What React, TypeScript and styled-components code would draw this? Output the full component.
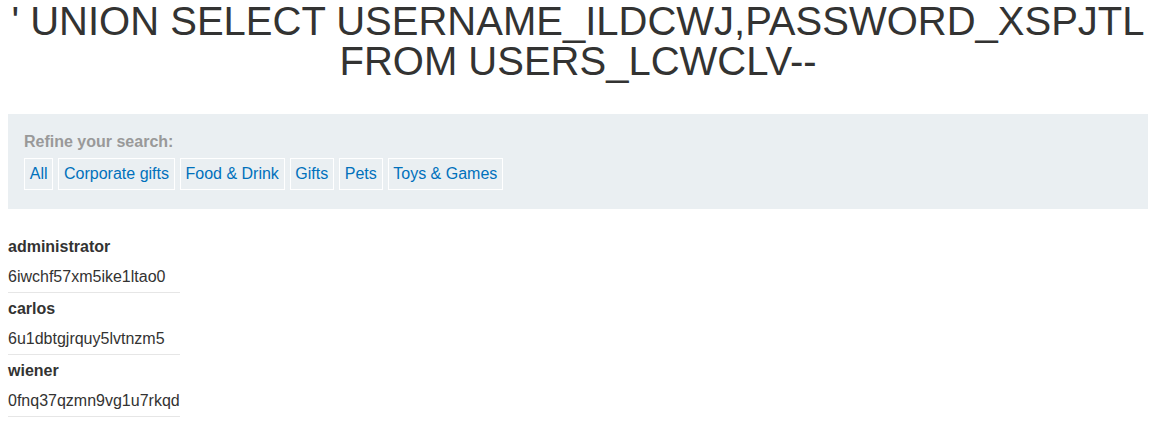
import React from 'react'
import styled, { createGlobalStyle } from 'styled-components'

const GlobalStyle = createGlobalStyle`
  body {
    margin: 0;
    padding: 2px 7px 0 8px;
    background: #fff;
    font-family: "Liberation Sans", Arial, sans-serif;
    color: #333332;
  }
`;

const Title = styled.h1`
  margin: 0 0 33px;
  font-size: 40px;
  font-weight: 400;
  line-height: 39.5px;
  text-align: center;
  color: #333332;
`;

const Filters = styled.section`
  background: #eaeff2;
  padding: 19px 16px 19px;
`;

const FilterLabel = styled.div`
  font-size: 16px;
  font-weight: 700;
  color: #999;
  line-height: 18px;
  margin-bottom: 7px;
`;

const FilterList = styled.div`
  display: flex;
  gap: 5px;
`;

const FilterLink = styled.a`
  display: flex;
  align-items: center;
  height: 32px;
  box-sizing: border-box;
  padding: 0 4.75px;
  border: 1px solid #fff;
  color: #0071bc;
  font-size: 16px;
  text-decoration: none;
`;

const Table = styled.table`
  margin-top: 22px;
  border-collapse: collapse;
  font-size: 16px;
  color: #333332;
`;

const HeadCell = styled.th`
  text-align: left;
  font-weight: 700;
  padding: 6px 0 5px;
  line-height: 20px;
`;

const DataCell = styled.td`
  padding: 5px 0 5px;
  line-height: 20px;
  border-bottom: 1px solid #e6e6e6;
`;

const categories = ['All', 'Corporate gifts', 'Food & Drink', 'Gifts', 'Pets', 'Toys & Games'];

const users = [
  { name: 'administrator', password: '6iwchf57xm5ike1ltao0' },
  { name: 'carlos', password: '6u1dbtgjrquy5lvtnzm5' },
  { name: 'wiener', password: '0fnq37qzmn9vg1u7rkqd' },
];

const App = () => {
  return (
    <>
      <GlobalStyle />
      <Title>' UNION SELECT USERNAME_ILDCWJ,PASSWORD_XSPJTL FROM USERS_LCWCLV--</Title>
      <Filters>
        <FilterLabel>Refine your search:</FilterLabel>
        <FilterList>
          {categories.map((c) => (
            <FilterLink key={c} href="#">{c}</FilterLink>
          ))}
        </FilterList>
      </Filters>
      <Table>
        <tbody>
          {users.map((u) => (
            <React.Fragment key={u.name}>
              <tr><HeadCell>{u.name}</HeadCell></tr>
              <tr><DataCell>{u.password}</DataCell></tr>
            </React.Fragment>
          ))}
        </tbody>
      </Table>
    </>
  )
}

export default App
